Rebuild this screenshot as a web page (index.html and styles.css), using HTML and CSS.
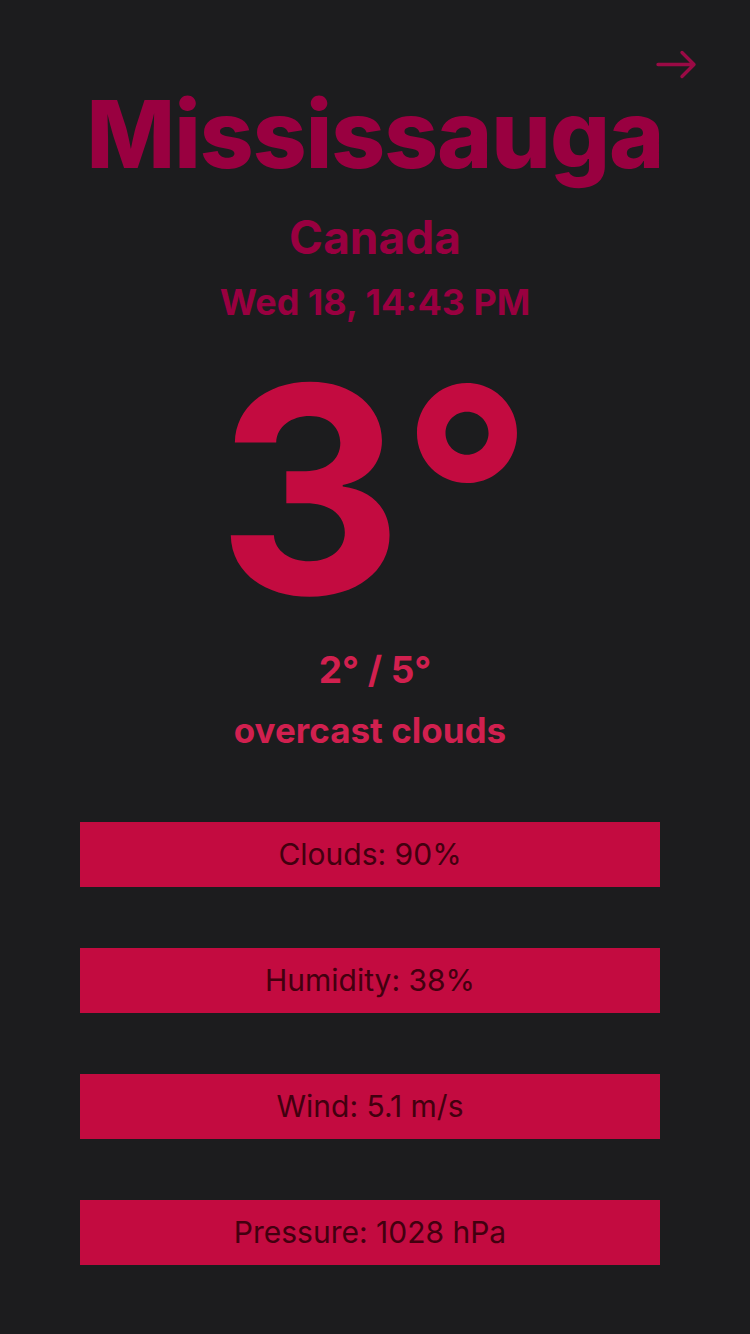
FILE: index.html
```html
<!DOCTYPE html>
<html>
<head>
<meta charset="utf-8">
<link rel="stylesheet" href="styles.css">
</head>
<body>
<main class="screen">
  <header class="top">
    <button class="next" aria-label="Next">
      <svg width="42" height="36" viewBox="0 0 42 36"><path d="M2 17.5H38M26 5.5L38 17.5L26 29.5" fill="none" stroke="#9a0a45" stroke-width="3.4" stroke-linecap="round" stroke-linejoin="round"/></svg>
    </button>
  </header>
  <section class="place">
    <h1 class="city">Mississauga</h1>
    <h2 class="country">Canada</h2>
    <p class="date">Wed 18, 14:43 PM</p>
  </section>
  <section class="now">
    <div class="temp">3°</div>
    <div class="range">2° / 5°</div>
    <div class="desc">overcast clouds</div>
  </section>
  <section class="stats">
    <div class="stat">Clouds: 90%</div>
    <div class="stat">Humidity: 38%</div>
    <div class="stat">Wind: 5.1 m/s</div>
    <div class="stat">Pressure: 1028 hPa</div>
  </section>
</main>
</body>
</html>
```
FILE: styles.css
```css
html, body {
  margin: 0;
  padding: 0;
  background: #1c1c1e;
}
body {
  font-family: Inter, "Noto Sans", sans-serif;
  width: 750px;
  height: 1334px;
  overflow: hidden;
}
.screen {
  display: flex;
  flex-direction: column;
  align-items: center;
}
.top {
  align-self: stretch;
  display: flex;
  justify-content: flex-end;
  height: 0;
  padding-right: 52px;
}
.next {
  background: none;
  border: 0;
  padding: 0;
  margin-top: 47px;
  height: 36px;
}
.next svg { display: block; }
.place {
  display: flex;
  flex-direction: column;
  align-items: center;
  color: #990040;
}
.city {
  margin: 77px 0 0;
  font-size: 94px;
  font-weight: 800;
  line-height: 115px;
  letter-spacing: -1px;
}
.country {
  margin: 12px 0 0;
  font-size: 46px;
  font-weight: 700;
  line-height: 66px;
}
.date {
  margin: 0;
  font-size: 36px;
  font-weight: 700;
  line-height: 64px;
}
.now {
  display: flex;
  flex-direction: column;
  align-items: center;
}
.temp {
  color: #c30b40;
  font-size: 288px;
  font-weight: 650;
  line-height: 290px;
  margin: 10px 0 0 0;
}
.range, .desc {
  color: #d1204f;
  font-weight: 700;
  line-height: 60px;
}
.range {
  font-size: 37px;
  margin-top: 6px;
}
.desc {
  font-size: 35px;
  margin-left: -10px;
}
.stats {
  align-self: flex-start;
  margin: 62px 0 0 80px;
  display: flex;
  flex-direction: column;
  gap: 61px;
}
.stat {
  width: 580px;
  height: 65px;
  background: #c30b40;
  color: #42000f;
  font-size: 30px;
  line-height: 65px;
  text-align: center;
}
```
